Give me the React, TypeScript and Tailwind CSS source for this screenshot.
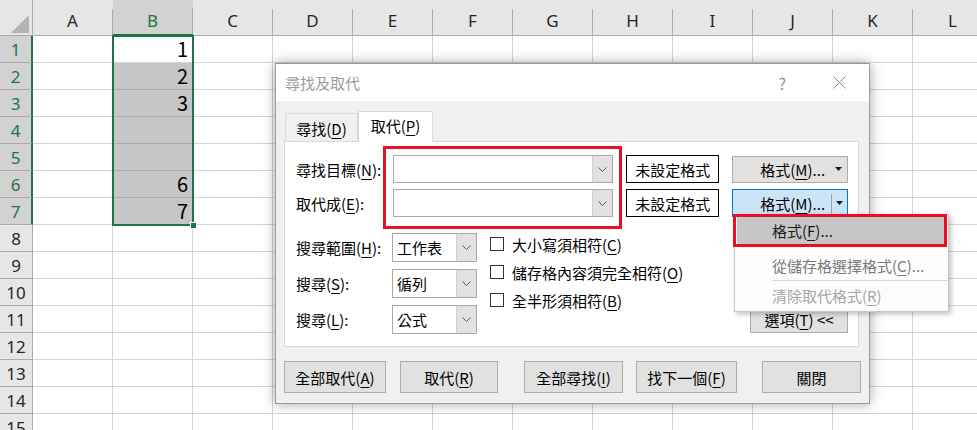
import React from 'react';

const COLS = ['A', 'B', 'C', 'D', 'E', 'F', 'G', 'H', 'I', 'J', 'K', 'L'];
const ROWS = Array.from({ length: 15 }, (_, i) => i + 1);
const VALUES: Record<number, string> = { 1: '1', 2: '2', 3: '3', 6: '6', 7: '7' };

function Key({ k }: { k: string }) {
  return <span className="underline underline-offset-[3px] decoration-1">{k}</span>;
}

function Chevron() {
  return (
    <svg width="9" height="5" viewBox="0 0 9 5">
      <polyline points="0.5,0.5 4.5,4.5 8.5,0.5" fill="none" stroke="#5a5a5a" strokeWidth="1" />
    </svg>
  );
}

function Arrow() {
  return (
    <svg width="7" height="4" viewBox="0 0 7 4">
      <polygon points="0,0 7,0 3.5,4" fill="#1a1a1a" />
    </svg>
  );
}

function Combo({ className, text }: { className: string; text?: string }) {
  return (
    <div className={`flex border border-[#a9a9a9] bg-white ${className}`}>
      <div className="flex flex-1 items-center pl-[4px] text-[15px] leading-none">{text}</div>
      <div className="flex w-[20px] items-center justify-center border-l border-[#d0d0d0] bg-[#e1e1e1]">
        <Chevron />
      </div>
    </div>
  );
}

function Btn({ className, children }: { className: string; children: React.ReactNode }) {
  return (
    <div
      className={`flex h-[32px] items-center justify-center border border-[#adadad] bg-[#e1e1e1] text-[15px] leading-none ${className}`}
    >
      {children}
    </div>
  );
}

function Sheet() {
  return (
    <div className="grid grid-cols-[33px_repeat(12,80px)] grid-rows-[36px_repeat(15,27px)]">
      <div className="flex items-end justify-end border-r border-b border-[#ababab] bg-[#e6e6e6] pr-[3px] pb-[2px]">
        <svg width="18" height="18" viewBox="0 0 18 18">
          <polygon points="18,0 18,18 0,18" fill="#b4b4b4" />
        </svg>
      </div>
      {COLS.map((c) =>
        c === 'B' ? (
          <div key={c} className="flex border-b-2 border-[#217346] bg-[#d2d2d2] text-[#217346]">
            <div className="flex flex-1 items-center justify-center pt-[6px] text-[17px] leading-none">{c}</div>
            <div className="h-[26px] w-px self-end bg-[#ababab]" />
          </div>
        ) : (
          <div key={c} className="flex border-b border-[#ababab] bg-[#e6e6e6] text-[#262626]">
            <div className="flex flex-1 items-center justify-center pt-[6px] text-[17px] leading-none">{c}</div>
            <div className="h-[26px] w-px self-end bg-[#ababab]" />
          </div>
        )
      )}
      {ROWS.map((r) => (
        <React.Fragment key={r}>
          {r <= 7 ? (
            <div className="flex items-center justify-center border-r-2 border-b border-r-[#217346] border-b-[#ababab] bg-[#d2d2d2] text-[17px] leading-none text-[#217346]">
              {r}
            </div>
          ) : (
            <div className="flex items-center justify-center border-r border-b border-[#ababab] bg-[#e6e6e6] text-[17px] leading-none text-[#262626]">
              {r}
            </div>
          )}
          {COLS.map((c) => {
            if (c === 'B' && r <= 7) {
              return (
                <div
                  key={c}
                  className={`flex items-end justify-end border-r border-b pr-[4px] pb-[3px] font-['Noto_Sans_CJK_TC',sans-serif] text-[20px] leading-none ${
                    r === 1 ? 'border-[#d4d4d4] bg-white' : 'border-[#ababab] bg-[#c6c6c6]'
                  }`}
                >
                  {VALUES[r]}
                </div>
              );
            }
            return <div key={c} className="border-r border-b border-[#d4d4d4] bg-white" />;
          })}
        </React.Fragment>
      ))}
    </div>
  );
}

function FindReplaceDialog() {
  return (
    <div className="absolute top-[63px] left-[275px] flex h-[341px] w-[595px] flex-col border border-[#9b9b9b] bg-[#f0f0f0] shadow-[0_0_12px_rgba(0,0,0,0.35)] font-['Noto_Sans_CJK_TC',sans-serif]">
      <div className="flex h-[37px] items-center bg-white pl-[9px] text-[15px] leading-none text-[#9b9b9b]">
        <span>尋找及取代</span>
        <span className="mr-[47px] ml-auto text-[16px] text-[#8c8c8c]">?</span>
        <svg className="mr-[23px]" width="13" height="13" viewBox="0 0 13 13">
          <path d="M0.5 0.5L12.5 12.5M12.5 0.5L0.5 12.5" stroke="#8c8c8c" strokeWidth="1" />
        </svg>
      </div>

      <div className="flex flex-col pt-[10px] pl-[8px]">
        <div className="relative z-10 flex h-[30px] items-end pl-[1px] text-[15px] leading-none">
          <div className="flex h-[28px] w-[73px] items-center justify-center border border-b-0 border-[#d9d9d9] bg-[#f0f0f0] pt-[2px]">
            尋找(<Key k="D" />)
          </div>
          <div className="-mb-px flex h-[31px] w-[75px] items-center justify-center border border-b-0 border-[#d9d9d9] bg-white pb-[4px]">
            取代(<Key k="P" />)
          </div>
        </div>

        <div className="h-[206px] w-[575px] border border-[#d9d9d9] bg-white pt-[13px] pr-[10px] pl-[11px] text-[15px] leading-none">
          <div className="flex h-[28px] items-center">
            <div className="w-[97px]">
              尋找目標(<Key k="N" />):
            </div>
            <Combo className="h-[28px] w-[221px]" />
            <div className="ml-[13px] flex h-[28px] w-[93px] items-center justify-center border border-black bg-white">
              未設定格式
            </div>
            <div className="ml-[13px] flex h-[27px] w-[116px] items-center border border-[#adadad] bg-[#e1e1e1]">
              <span className="pl-[27px]">
                格式(<Key k="M" />)...
              </span>
              <span className="mr-[5px] ml-auto flex">
                <Arrow />
              </span>
            </div>
          </div>
          <div className="mt-[6px] flex h-[28px] items-center">
            <div className="w-[97px]">
              取代成(<Key k="E" />):
            </div>
            <Combo className="h-[28px] w-[221px]" />
            <div className="ml-[13px] flex h-[28px] w-[93px] items-center justify-center border border-black bg-white">
              未設定格式
            </div>
            <div className="ml-[13px] flex h-[28px] w-[116px] items-center border border-[#0078d7] bg-[#cce4f7]">
              <span className="pl-[27px]">
                格式(<Key k="M" />)...
              </span>
              <span className="ml-auto h-[22px] w-px self-end bg-[#8aa9c4]" />
              <span className="mr-[4px] ml-[4px] flex">
                <Arrow />
              </span>
            </div>
          </div>

          <div className="mt-[16px] flex">
            <div className="flex flex-col gap-[7px]">
              <div className="flex h-[29px] items-center">
                <div className="w-[96px]">
                  搜尋範圍(<Key k="H" />):
                </div>
                <Combo className="h-[29px] w-[85px]" text="工作表" />
              </div>
              <div className="flex h-[29px] items-center">
                <div className="w-[96px]">
                  搜尋(<Key k="S" />):
                </div>
                <Combo className="h-[29px] w-[85px]" text="循列" />
              </div>
              <div className="flex h-[29px] items-center">
                <div className="w-[96px]">
                  搜尋(<Key k="L" />):
                </div>
                <Combo className="h-[29px] w-[85px]" text="公式" />
              </div>
            </div>
            <div className="-mt-[3px] ml-[13px] flex flex-col">
              <div className="flex h-[28px] items-center">
                <div className="h-[14px] w-[14px] border border-[#333333] bg-white" />
                <span className="ml-[8px]">
                  大小寫須相符(<Key k="C" />)
                </span>
              </div>
              <div className="flex h-[28px] items-center">
                <div className="h-[14px] w-[14px] border border-[#333333] bg-white" />
                <span className="ml-[8px]">
                  儲存格內容須完全相符(<Key k="O" />)
                </span>
              </div>
              <div className="flex h-[28px] items-center">
                <div className="h-[14px] w-[14px] border border-[#333333] bg-white" />
                <span className="ml-[8px]">
                  全半形須相符(<Key k="B" />)
                </span>
              </div>
            </div>
            <div className="mb-[1px] ml-auto flex h-[27px] w-[98px] items-center justify-center self-end border border-[#adadad] bg-[#e1e1e1]">
              選項(<Key k="T" />) &lt;&lt;
            </div>
          </div>
        </div>

        <div className="mt-[14px] flex">
          <Btn className="w-[102px]">
            全部取代(<Key k="A" />)
          </Btn>
          <Btn className="ml-[14px] w-[98px]">
            取代(<Key k="R" />)
          </Btn>
          <Btn className="ml-[26px] w-[99px]">
            全部尋找(<Key k="I" />)
          </Btn>
          <Btn className="ml-[13px] w-[101px]">
            找下一個(<Key k="F" />)
          </Btn>
          <Btn className="ml-[25px] w-[99px]">關閉</Btn>
        </div>
      </div>
    </div>
  );
}

function FormatMenu() {
  return (
    <div className="absolute top-[214px] left-[734px] flex h-[98px] w-[215px] flex-col border border-[#c8c8c8] bg-[#fcfcfc] pt-[2px] font-['Noto_Sans_CJK_TC',sans-serif] text-[15px] leading-none shadow-[2px_2px_5px_rgba(0,0,0,0.25)]">
      <div className="mx-[2px] flex h-[27px] items-center bg-[#c6c6c6] pl-[35px] text-[#1a1a1a]">
        格式(<Key k="F" />)...
      </div>
      <div className="mt-[6px] flex h-[30px] items-center pl-[37px] text-[#7a7a7a]">
        從儲存格選擇格式(<Key k="C" />)...
      </div>
      <div className="ml-[37px] h-px bg-[#d7d7d7]" />
      <div className="flex h-[28px] items-center pl-[37px] text-[#a6a6a6]">
        清除取代格式(<Key k="R" />)
      </div>
    </div>
  );
}

export default function App() {
  return (
    <div className="relative h-[430px] w-[977px] overflow-hidden bg-white font-['Noto_Sans',sans-serif] text-black">
      <Sheet />
      <div className="absolute top-[35px] left-[112px] h-[191px] w-[82px] border-2 border-[#217346]" />
      <div className="absolute top-[222px] left-[190px] h-[7px] w-[7px] border border-white bg-[#217346]" />
      <FindReplaceDialog />
      <FormatMenu />
      <div className="absolute top-[146px] left-[383px] h-[83px] w-[239px] border-[3px] border-[#e81123]" />
      <div className="absolute top-[214px] left-[733px] h-[33px] w-[214px] border-[3px] border-[#e81123]" />
    </div>
  );
}
